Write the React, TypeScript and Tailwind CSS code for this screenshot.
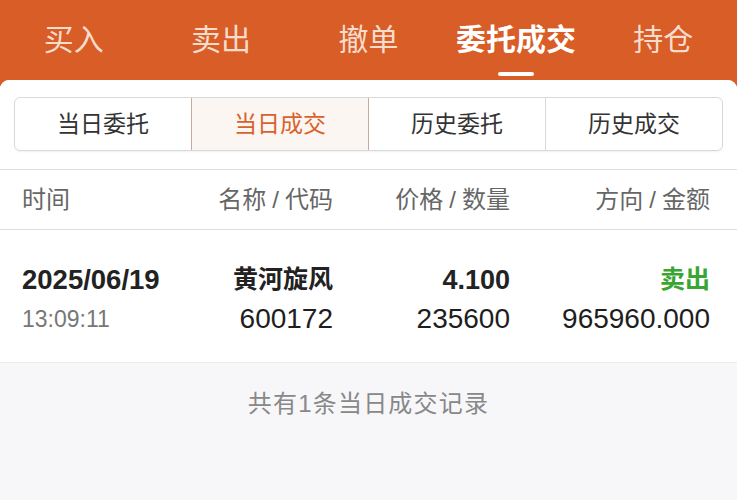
import React from "react";

const font = { fontFamily: '"Liberation Sans", "Noto Sans CJK SC", sans-serif' };

function Slash() {
  return <span className="mx-[6px]">/</span>;
}

export default function App() {
  const tabs = ["买入", "卖出", "撤单", "委托成交", "持仓"];
  const segs = ["当日委托", "当日成交", "历史委托", "历史成交"];
  return (
    <div className="w-[737px] h-[500px] bg-[#d95d26] flex flex-col overflow-hidden" style={font}>
      <div className="h-[80px] grid grid-cols-5 shrink-0">
        {tabs.map((t, i) => (
          <div key={t} className="relative flex items-center justify-center">
            <span
              className={
                i === 3
                  ? "text-[30px] font-bold text-white leading-none"
                  : "text-[30px] text-[#f6dccd] leading-none"
              }
            >
              {t}
            </span>
            {i === 3 && (
              <div className="absolute left-1/2 -translate-x-1/2 top-[72px] w-[36px] h-[4px] rounded-full bg-white" />
            )}
          </div>
        ))}
      </div>
      <div className="flex-1 bg-[#f7f7fa] rounded-t-[9px] overflow-hidden flex flex-col">
        <div className="bg-white">
          <div className="pt-[17px] pb-[18px] px-[14px]">
            <div className="flex h-[54px] rounded-[6px] border border-[#d9d9d9] overflow-hidden shadow-[0_1px_2px_rgba(0,0,0,0.06)]">
              {segs.map((s, i) => (
                <div
                  key={s}
                  className={
                    i === 1
                      ? "flex-1 flex items-center justify-center bg-[#fbf6f2] border-x border-[#cbab9c] text-[#d9622b] text-[23px]"
                      : i === 3
                      ? "flex-1 flex items-center justify-center border-l border-[#d9d9d9] text-[#333] text-[23px]"
                      : "flex-1 flex items-center justify-center text-[#333] text-[23px]"
                  }
                >
                  {s}
                </div>
              ))}
            </div>
          </div>
          <div className="border-t border-[#dedede] h-[60px] flex items-center pl-[22px] text-[24px] text-[#666]">
            <div className="w-[150px]">时间</div>
            <div className="w-[161px] text-right">名称<Slash />代码</div>
            <div className="w-[177px] text-right">价格<Slash />数量</div>
            <div className="w-[200px] text-right">方向<Slash />金额</div>
          </div>
          <div className="border-t border-[#dedede] h-[134px] flex flex-col justify-center pl-[22px] border-b border-b-[#ececec]">
            <div className="flex items-center h-[38px] text-[#222] mt-[8px]">
              <div className="w-[150px] text-[27.5px] font-bold">2025/06/19</div>
              <div className="w-[161px] text-right text-[25px] font-bold">黄河旋风</div>
              <div className="w-[177px] text-right text-[27px] font-bold">4.100</div>
              <div className="w-[200px] text-right text-[25px] font-bold text-[#3aa532]">卖出</div>
            </div>
            <div className="flex items-center h-[40px] text-[28px]">
              <div className="w-[150px] text-[23px] text-[#777]">13:09:11</div>
              <div className="w-[161px] text-right text-[#1e1e1e]">600172</div>
              <div className="w-[177px] text-right text-[#1e1e1e]">235600</div>
              <div className="w-[200px] text-right text-[#1e1e1e]">965960.000</div>
            </div>
          </div>
        </div>
        <div className="h-[82px] flex items-center justify-center text-[24px] tracking-[1.2px] text-[#888]">
          共有1条当日成交记录
        </div>
      </div>
    </div>
  );
}
